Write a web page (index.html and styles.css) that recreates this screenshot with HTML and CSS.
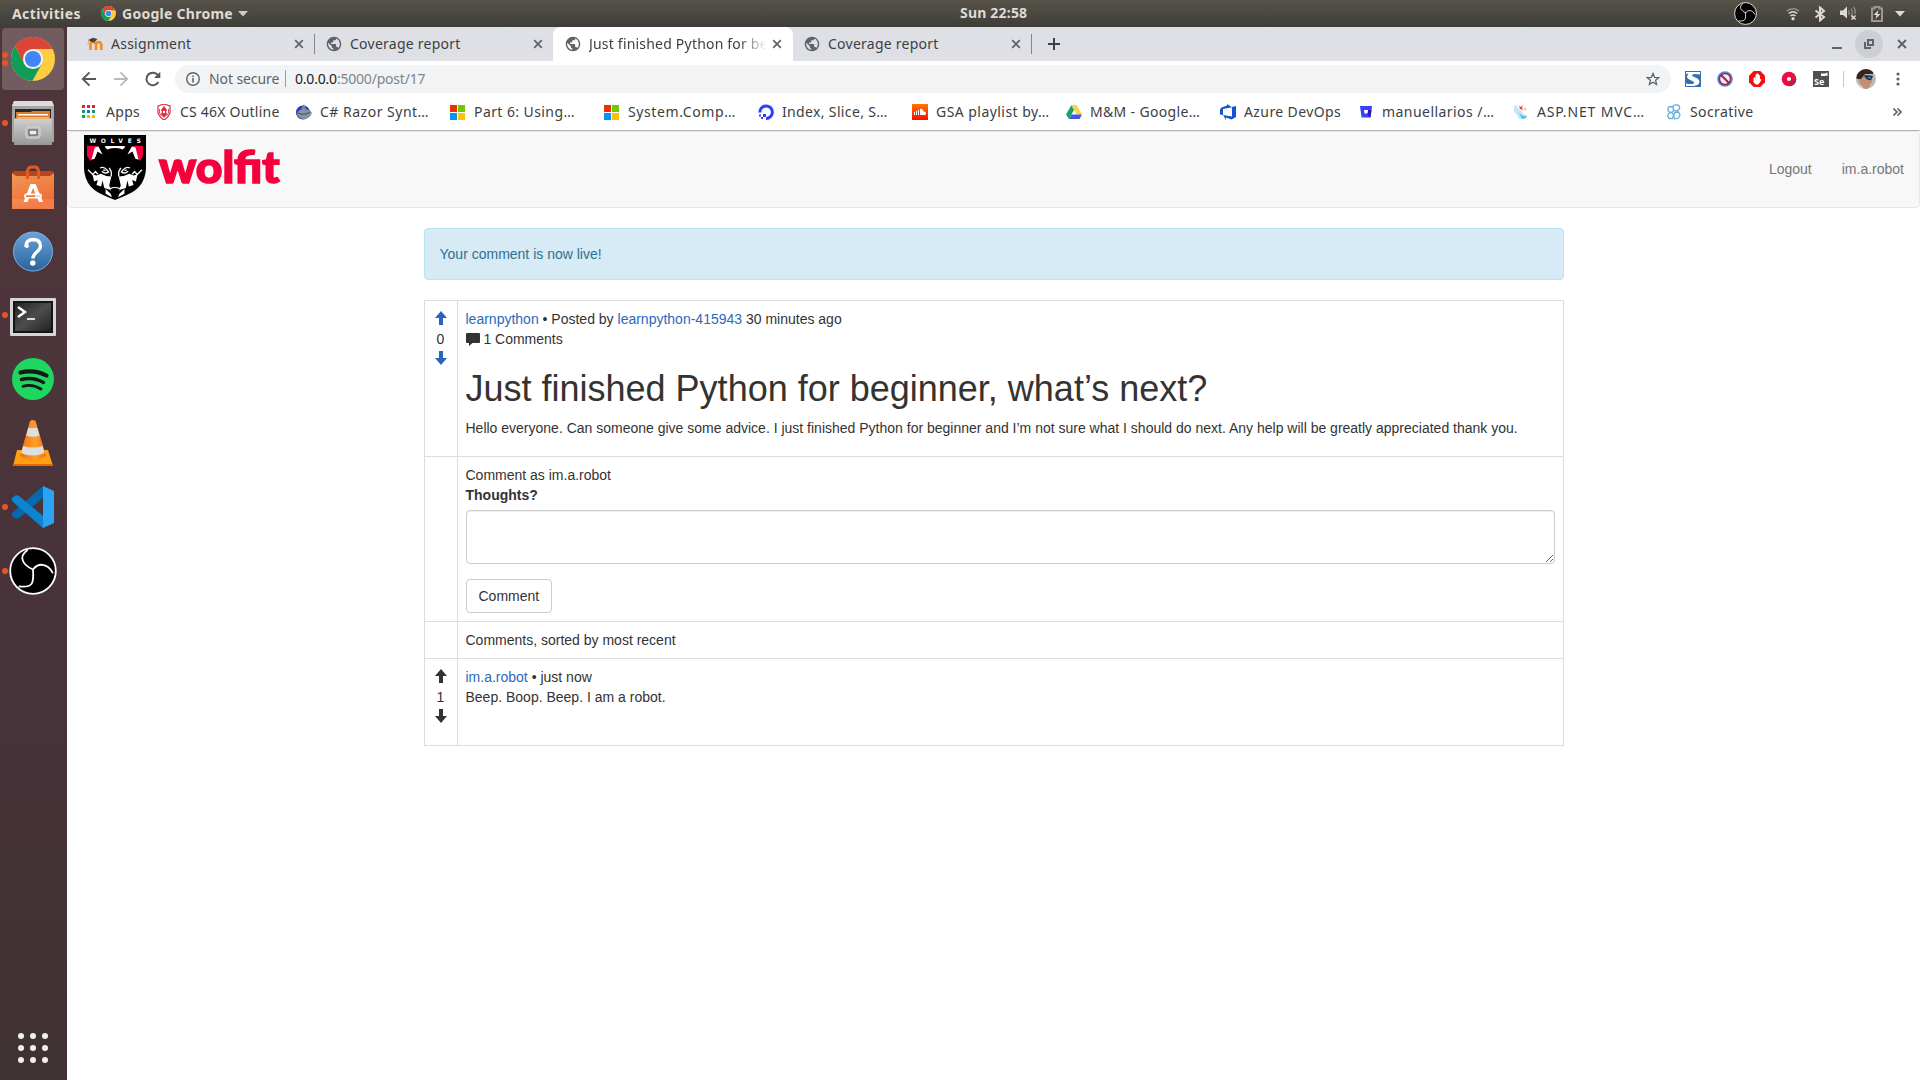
FILE: index.html
```html
<!DOCTYPE html>
<html lang="en">
<head>
<meta charset="utf-8">
<title>Just finished Python for beginner, what’s next?</title>
<link rel="stylesheet" href="styles.css">
</head>
<body>
<svg class="defs" width="0" height="0" aria-hidden="true">
  <symbol id="chrome" viewBox="0 0 48 48">
    <circle cx="24" cy="24" r="24" fill="#ffcd40"/>
    <path d="M4.500 10A24 24 0 0 1 45.400 13.200H24L14.500 29.500Z" fill="#db4437"/>
    <path d="M4.500 10L14.500 29.500L24 35L33.500 29.500L23.300 48A24 24 0 0 1 4.500 10Z" fill="#0f9d58"/>
    <circle cx="24" cy="24" r="11" fill="#f1f1f1"/>
    <circle cx="24" cy="24" r="8.800" fill="#4285f4"/>
  </symbol>
  <symbol id="obs" viewBox="0 0 48 48">
    <circle cx="24" cy="24" r="22.800" fill="#000" stroke="#fff" stroke-width="1.800"/>
    <g fill="none" stroke="#fff" stroke-width="1.800" stroke-linecap="round">
      <path d="M24 22.500C14 18 9 10 18 3.500M24 22.500C29 16 38 15.500 43.500 25.500M24 22.500C25 36 24 41 10.500 39.500"/>
    </g>
  </symbol>
  <symbol id="globe" viewBox="1 1 22 22">
    <path d="M12 2C6.480 2 2 6.480 2 12s4.480 10 10 10 10-4.480 10-10S17.520 2 12 2zm-1 17.930c-3.950-.49-7-3.850-7-7.930 0-.62.08-1.210.21-1.790L9 15v1c0 1.100.9 2 2 2v1.930zm6.900-2.540c-.26-.81-1-1.390-1.900-1.390h-1v-3c0-.55-.45-1-1-1H8v-2h2c.55 0 1-.45 1-1V7h2c1.100 0 2-.9 2-2v-.41c2.930 1.190 5 4.060 5 7.410 0 2.080-.8 3.970-2.100 5.390z" fill="#5f6368"/>
  </symbol>
  <symbol id="close" viewBox="0 0 10 10"><path d="M1.200 1.200L8.800 8.800M8.800 1.200L1.200 8.800" stroke="#5f6368" stroke-width="1.700"/></symbol>
  <symbol id="windows" viewBox="0 0 16 16"><path fill="#f22f00" d="M0 0H7.500V7.500H0Z"/><path fill="#70c800" d="M8.500 0H16V7.500H8.500Z"/><path fill="#0096f2" d="M0 8.500H7.500V16H0Z"/><path fill="#ffc200" d="M8.500 8.500H16V16H8.500Z"/></symbol>
  <symbol id="up" viewBox="0 0 12 14"><path d="M6 0L12 7H8V14H4V7H0Z" fill="currentColor"/></symbol>
  <symbol id="down" viewBox="0 0 12 14"><path d="M6 14L12 7H8V0H4V7H0Z" fill="currentColor"/></symbol>
</svg>

<header class="panel">
  <span class="activities">Activities</span>
  <span class="app-menu"><svg width="15" height="15"><use href="#chrome"/></svg><span class="app-name">Google Chrome</span><svg width="10" height="6"><path d="M0 0H10L5 5.500Z" fill="#cfccc4"/></svg></span>
  <span class="clock">Sun 22:58</span>
  <div class="indicators">
    <svg class="tray-obs" width="23" height="23"><use href="#obs"/></svg>
    <svg width="14" height="14" viewBox="0 0 14 14" fill="none" stroke="#dfdbd2" stroke-width="1.600"><path d="M1 4Q7 -.5 13 4" opacity=".45"/><path d="M2.800 6.500Q7 3 11.200 6.500M4.500 9Q7 7 9.500 9"/><circle cx="7" cy="11.800" r="1.200" fill="#dfdbd2" stroke-width="1"/></svg>
    <svg width="12" height="16" viewBox="0 0 12 16" fill="none" stroke="#dfdbd2" stroke-width="2"><path d="M1.500 4.500L10 11L6 14.500V1.500L10 5L1.500 11.500"/></svg>
    <svg width="17" height="15" viewBox="0 0 17 15"><path d="M0 4.500H3L7 .5V12.500L3 9H0Z" fill="#dfdbd2"/><path d="M8.500 4Q10 6.500 8.500 9M11 2.500Q13.500 6.500 11 10.500M13.500 1Q16 4 15 8" fill="none" stroke="#8a867e" stroke-width="1.400"/><path d="M11.500 9.500L15.500 13.500M15.500 9.500L11.500 13.500" stroke="#dfdbd2" stroke-width="1.700"/></svg>
    <svg width="12" height="16" viewBox="0 0 12 16"><path d="M1 2.500H3.500V1H8.500V2.500H11V15H1Z" fill="none" stroke="#9b978f" stroke-width="2"/><path d="M7.500 4L2.500 9H5.500L4.500 13L9.500 8H6.500Z" fill="#dfdbd2"/></svg>
    <svg width="10" height="6"><path d="M0 0H10L5 5.500Z" fill="#dfdbd2"/></svg>
  </div>
</header>

<div class="desktop">
<nav class="dock">
  <div class="slot active twice"><svg width="44" height="44"><use href="#chrome"/></svg></div>
  <div class="slot running"><svg width="42" height="44" viewBox="0 0 42 44">
    <defs><linearGradient id="metal" x2="0" y2="1"><stop stop-color="#cfcfcf"/><stop offset="1" stop-color="#989898"/></linearGradient></defs>
    <path d="M2 0H40L42 5V41H0V5Z" fill="#a5a5a5"/><path d="M2 0H40L42 5H0Z" fill="#dcdcdc"/><path d="M3 8H39V17H3Z" fill="#2d2622"/><path d="M4 11H19L20 10H38V17H4Z" fill="#e07b28"/><path d="M6 13H36V14.500H6Z" fill="#fff"/><path d="M5 16H37V18H5Z" fill="#f3b36d"/><path d="M2 18H40V44H2Z" fill="url(#metal)"/><rect x="14" y="26" width="14" height="11" rx="2" fill="#bbb" stroke="#d8d8d8"/><rect x="17" y="29" width="8" height="5" fill="#eee" stroke="#444"/></svg></div>
  <div class="slot"><svg width="42" height="44" viewBox="0 0 42 44">
    <defs><linearGradient id="bag" x2=".4" y2="1"><stop stop-color="#ec9a59"/><stop offset="1" stop-color="#f16b30"/></linearGradient></defs>
    <path d="M0 8L2 6H40L42 8V44H0Z" fill="#b8461c"/><path d="M0 8L4 11H38L42 8V44H0Z" fill="url(#bag)"/><path d="M0 34H42V44H0Z" fill="#fff" opacity=".12"/><path d="M15.500 14V6Q16 2 20 2H23Q26 2 26.500 6V14" fill="none" stroke="#e25a23" stroke-width="3"/><path d="M18.500 19H23.500L31 37H27L21 23L15.500 37H11.500Z" fill="#fff"/><rect x="12" y="28.500" width="18" height="5" rx="2.500" fill="#fff"/><path d="M14 30.300H23V32H14Z" fill="#ef7134"/><path d="M23 30.300H29V32H23Z" fill="#ddd"/></svg></div>
  <div class="slot"><svg width="42" height="42" viewBox="0 0 42 42">
    <defs><linearGradient id="help" x2="0" y2="1"><stop stop-color="#6ba4d8"/><stop offset="1" stop-color="#28639b"/></linearGradient></defs>
    <circle cx="21" cy="21.500" r="19.500" fill="url(#help)" stroke="#80afd8"/><path d="M14 17Q13.500 10 20.500 9.500Q28.500 9.500 28.500 16C28.500 21.500 21.500 22 20.700 28.500" fill="none" stroke="#fff" stroke-width="3.300"/><circle cx="14.900" cy="16" r="2" fill="#fff"/><circle cx="20.800" cy="33" r="2.700" fill="#fff"/></svg></div>
  <div class="slot running terminal"><svg width="46" height="39" viewBox="0 0 46 39">
    <defs><linearGradient id="screen" x2="1" y2="1"><stop stop-color="#232323"/><stop offset=".5" stop-color="#4d4d4d"/><stop offset="1" stop-color="#222"/></linearGradient></defs>
    <rect width="46" height="38" rx="1" fill="#d6d6d6"/><rect x="3" y="3" width="40" height="32" fill="#151515"/><path d="M5 5H41V33H5Z" fill="url(#screen)"/><path d="M8 9L15 14L8 19" fill="none" stroke="#fff" stroke-width="2.400"/><path d="M17 21H25" stroke="#ddd" stroke-width="2"/></svg></div>
  <div class="slot"><svg width="42" height="42" viewBox="0 0 42 42"><circle cx="21" cy="21" r="21" fill="#1ed760"/><path d="M8.500 14.500Q22 11 34.500 17.500" fill="none" stroke="#171717" stroke-width="4.200" stroke-linecap="round"/><path d="M9.500 21.500Q21 18.500 31.500 24.500" fill="none" stroke="#171717" stroke-width="3.400" stroke-linecap="round"/><path d="M11 28.300Q20 25.500 29 31" fill="none" stroke="#171717" stroke-width="2.800" stroke-linecap="round"/></svg></div>
  <div class="slot"><svg width="42" height="46" viewBox="0 0 42 46">
    <defs><linearGradient id="cone"><stop stop-color="#ef7408"/><stop offset=".6" stop-color="#ff9d2e"/><stop offset="1" stop-color="#ef7408"/></linearGradient></defs>
    <path d="M5 30H36L41 46H1Z" fill="#ffa012"/><path d="M1.300 44H40.500L41 46H1Z" fill="#df6900"/><path d="M18 1Q20.800 -1 23.500 1L34 36Q21 44 8 36Z" fill="url(#cone)"/><path d="M16.200 8H25.300L27.500 15.500Q21 18 14.200 15.500Z" fill="#dedede"/><path d="M11.200 26Q21 29 30.600 26L32.500 33Q21 38 9 33Z" fill="#dedede"/></svg></div>
  <div class="slot running"><svg width="42" height="42" viewBox="0 0 42 42"><path d="M31 0L0 27V30L4 33L7 32L31 12Z" fill="#0469ad"/><path d="M0 12L4 9L7 10L31 30V42L0 15Z" fill="#0c84d2"/><path d="M31 0L42 5V37L31 42Z" fill="#2aa3f3"/></svg></div>
  <div class="slot running"><svg width="48" height="48"><use href="#obs"/></svg></div>
  <div class="app-grid"><i></i><i></i><i></i><i></i><i></i><i></i><i></i><i></i><i></i></div>
</nav>

<main class="window">
  <div class="tabs">
    <div class="tab first"><svg class="fav" width="16" height="16" viewBox="0 0 16 16"><path d="M3.500 14V8.500Q3.500 6 6 6T9 8.500V14M9 8.500Q9.300 6 11.500 6T14.300 8.500V14" fill="none" stroke="#f68a1f" stroke-width="2.600"/><path d="M1 4L6 1.800L10.500 3L7 6.500L3.500 5.500Z" fill="#444"/><path d="M2 4L.8 9" stroke="#c9a574" stroke-width=".8"/></svg><span class="title">Assignment</span><svg class="x" width="10" height="10"><use href="#close"/></svg></div>
    <div class="tab"><svg class="fav" width="16" height="16"><use href="#globe"/></svg><span class="title">Coverage report</span><svg class="x" width="10" height="10"><use href="#close"/></svg></div>
    <div class="tab current"><svg class="fav" width="16" height="16"><use href="#globe"/></svg><span class="title fade">Just finished Python for be</span><svg class="x" width="10" height="10"><use href="#close"/></svg></div>
    <div class="tab last"><svg class="fav" width="16" height="16"><use href="#globe"/></svg><span class="title">Coverage report</span><svg class="x" width="10" height="10"><use href="#close"/></svg></div>
    <svg class="new-tab" width="12" height="12"><path d="M6 0V12M0 6H12" stroke="#3c4043" stroke-width="2"/></svg>
    <div class="controls">
      <svg width="10" height="14"><path d="M0 10H10V12H0Z" fill="#5f6368"/></svg>
      <span class="restore"><svg width="10" height="10"><path d="M4 1H9V6H4ZM1 3V9H7" fill="none" stroke="#5f6368" stroke-width="2"/></svg></span>
      <svg width="10" height="10" viewBox="0 0 10 10"><path d="M1 1L9 9M9 1L1 9" stroke="#5f6368" stroke-width="2"/></svg>
    </div>
  </div>

  <div class="toolbar">
    <svg width="16" height="16" viewBox="0 0 16 16" fill="none" stroke="#54585d" stroke-width="1.900"><path d="M15 8H2M8.500 1.300L1.800 8L8.500 14.700"/></svg>
    <svg width="16" height="16" viewBox="0 0 16 16" fill="none" stroke="#b9bbbe" stroke-width="1.900"><path d="M1 8H14M7.500 1.300L14.200 8L7.500 14.700"/></svg>
    <svg width="16" height="16" viewBox="0 0 16 16"><path d="M13.300 11A6.300 6.300 0 1 1 12.800 4.200" fill="none" stroke="#54585d" stroke-width="2"/><path d="M15.300 .8V7H9Z" fill="#54585d"/></svg>
    <div class="omnibox">
      <svg width="14" height="14" viewBox="0 0 14 14"><circle cx="7" cy="7" r="6.300" fill="none" stroke="#5f6368" stroke-width="1.400"/><path d="M6.200 6H7.800V10.500H6.200ZM6.200 3.400H7.800V5H6.200Z" fill="#5f6368"/></svg>
      <span class="insecure">Not secure</span>
      <span class="url"><b>0.0.0.0</b>:5000/post/17</span>
      <svg class="star" width="14" height="14" viewBox="0 0 14 14"><path d="M7 1.500L8.600 5.300L12.800 5.600L9.600 8.300L10.600 12.400L7 10.200L3.400 12.400L4.400 8.300L1.200 5.600L5.400 5.300Z" fill="none" stroke="#5f6368" stroke-width="1.300"/></svg>
    </div>
    <div class="extensions">
      <svg width="16" height="16" viewBox="0 0 16 16"><path d="M0 0H16V16H0Z" fill="#3470ac"/><path d="M1 1H15V3.500Q7 2 7 4.500C7 6 14.500 6.500 14.500 11Q14 15 7 15H1V12.500Q9 14 9 11.500C9 9.500 2 9 2 5.500L3.500 2.500L1 3Z" fill="#fff"/></svg>
      <svg width="16" height="16" viewBox="0 0 16 16"><circle cx="8" cy="8" r="7.800" fill="#4f8ee8"/><circle cx="8" cy="8" r="5.600" fill="#f6eaf0" stroke="#a62244" stroke-width="1.500"/><path d="M4 4L12 12" stroke="#8c2749" stroke-width="2"/></svg>
      <svg width="16" height="16" viewBox="0 0 16 16"><path d="M4.700 0H11.300L16 4.700V11.300L11.300 16H4.700L0 11.300V4.700Z" fill="#f40d12"/><path d="M4.500 7V11Q6 14 8.500 13.700Q10 13.500 12.500 8.500L11 8V4.500H10V7.500V3H9V7V2.500H7.500V7V3.500H6.500V8L5.500 6Z" fill="#fff"/></svg>
      <svg width="16" height="16" viewBox="0 0 16 16"><circle cx="8" cy="8" r="7.300" fill="#e90f40"/><path d="M8 15.300A7.300 7.300 0 0 0 15.300 8H8Z" fill="#bd1d4c"/><circle cx="8" cy="8" r="2" fill="#fff"/></svg>
      <svg width="16" height="16" viewBox="0 0 16 16"><path d="M0 0H16V16H0Z" fill="#505050"/><path d="M8 2.500H12L14.500 1.500V5L12 4.500V5H8Z" fill="#fff"/><text x="1" y="14" class="se">Se</text></svg>
      <span class="rule"></span>
      <svg width="20" height="20" viewBox="0 0 20 20"><defs><clipPath id="round"><circle cx="10" cy="10" r="10"/></clipPath></defs><g clip-path="url(#round)"><path fill="#b5bcb6" d="M0 0H20V20H0Z"/><path fill="#c48d76" d="M1 6H17L16 13L14 16L12 20H3L4 14Z"/><path fill="#d9d3cd" d="M0 15L5 16L8 20H0Z"/><path fill="#35251f" d="M0 9Q1 -2 12 0Q18 1 17 5L9 5L5 10H2Z"/><path fill="#153354" d="M8 6L17 7L15 11Q10 12 8 6Z"/><path fill="#18a6d6" d="M11 8L15 8L14 10Z"/></g></svg>
      <svg class="more" width="4" height="14"><circle cx="2" cy="2" r="1.600"/><circle cx="2" cy="7" r="1.600"/><circle cx="2" cy="12" r="1.600"/></svg>
    </div>
  </div>

  <div class="bookmarks">
    <span class="mark m1"><svg width="16" height="16" viewBox="0 0 16 16"><path fill="#ea1b3d" d="M0 1H3V4H0ZM5 1H8V4H5ZM10 1H13V4H10Z"/><path fill="#0aa15a" d="M0 6H3V9H0Z"/><path fill="#2865f3" d="M5 6H8V9H5Z"/><path fill="#0aa15a" d="M10 6H13V9H10ZM0 11H3V14H0Z"/><path fill="#ffb300" d="M5 11H8V14H5ZM10 11H13V14H10Z"/></svg><span>Apps</span></span>
    <span class="mark m2"><svg width="14" height="16" viewBox="0 0 14 16"><path d="M1 2L7 0L13 2V9Q11 14 7 16Q3 14 1 9Z" fill="#fff" stroke="#e5253f" stroke-width="1.200"/><path d="M7 2L10 6L9 8L10 10L7 14L4 10L5 8L4 6Z" fill="#e5253f"/><path d="M2.500 5V9L4.500 12M11.500 5V9L9.500 12" stroke="#e5253f" fill="none" stroke-width=".8"/><circle cx="7" cy="8" r="1.200" fill="#fff"/></svg><span>CS 46X Outline</span></span>
    <span class="mark m3"><svg width="16" height="16" viewBox="0 0 16 16"><circle cx="7" cy="8.500" r="7" fill="#223bb8"/><path d="M1 10Q2 5 8 5T16 9Q14 15 7 15Q2 14 1 10Z" fill="#8792a2"/><path d="M5 5L8 0L10 5Z" fill="#78859c"/><path d="M2 9Q8 12 14 8" stroke="#444d5c" fill="none"/></svg><span>C# Razor Synt…</span></span>
    <span class="mark m4"><svg width="15" height="15"><use href="#windows"/></svg><span>Part 6: Using…</span></span>
    <span class="mark m5"><svg width="15" height="15"><use href="#windows"/></svg><span>System.Comp…</span></span>
    <span class="mark m6"><svg width="16" height="16" viewBox="0 0 16 16"><path d="M1.800 8.500A6.300 6.300 0 1 1 8 14.500" fill="none" stroke="#2542ff" stroke-width="3"/><path d="M5 10H8V13H5ZM3 13H5V15H3ZM1 10.500H3V12.500H1Z" fill="#2542ff"/></svg><span>Index, Slice, S…</span></span>
    <span class="mark m7"><svg width="16" height="16" viewBox="0 0 16 16"><defs><linearGradient id="sound" x2="0" y2="1"><stop stop-color="#ff7800"/><stop offset="1" stop-color="#ff0c00"/></linearGradient></defs><path fill="url(#sound)" d="M0 0H16V16H0Z"/><path d="M8 5Q11 4 11.500 7.500Q14 7 14 9.500Q14 11 12.500 11H8Z" fill="#fff"/><path d="M2.500 8V11M4.500 7V11M6.500 6V11" stroke="#fff"/></svg><span>GSA playlist by…</span></span>
    <span class="mark m8"><svg width="16" height="16" viewBox="0 0 16 16"><path fill="#16a463" d="M5.500 1L8 6L3 15L0 10.500Z"/><path fill="#ffd33f" d="M5.500 1H10.500L16 10.500H10.500Z"/><path fill="#4356e6" d="M5.500 10.500H16L13.500 15H3Z"/></svg><span>M&amp;M - Google…</span></span>
    <span class="mark m9"><svg width="16" height="16" viewBox="0 0 16 16"><path d="M0 5.500L1.500 3.500L7 1.500V0L12 3.200L3 5V11L0 10.500ZM12 3L16 2V13L11.500 15.500L6 13.500V16L3 11L12 12.500Z" fill="#1254d5"/></svg><span>Azure DevOps</span></span>
    <span class="mark m10"><svg width="12" height="12" viewBox="0 0 12 12"><path d="M0 0H12L10.500 11.500H1.500Z" fill="#3543ff"/><path d="M8 4H11.500L10.500 11.500L7 8Z" fill="#3110c7"/><path d="M4 4H8L7.500 7.500H4.500Z" fill="#fff"/></svg><span>manuellarios /…</span></span>
    <span class="mark m11"><svg width="16" height="16" viewBox="0 0 16 16"><path d="M1 2L4 1L5 4L8 7L13 12L12 15L6 15L4 11L1 8Z" fill="#c5e8f6"/><path d="M6 2L8 3L10 1L9 4L10 6L7 5Z" fill="#e83f35"/><path d="M6 9Q11 14 14 11L13 14L9 15Z" fill="#63bce9"/><circle cx="12" cy="5" r="1.500" fill="#f3cfb6"/></svg><span>ASP.NET MVC…</span></span>
    <span class="mark m12"><svg width="14" height="16" viewBox="0 0 14 16" fill="none" stroke="#68b0da" stroke-width="1.300"><path d="M6.500 1.500L9 .7L12 1.500L12.700 4.500L10 7L7 6.500L6 4ZM1.500 3L4.500 2.500L6.500 4.500L6 7.500L3 8.500L.8 6.500ZM1.500 9.500L5 8.500L6.500 11L5.500 14.500L2 14.500L.8 12ZM8 8.500L11.500 8L13 11L11.500 14L8 15L6.500 12Z"/></svg><span>Socrative</span></span>
    <span class="overflow"><svg width="9" height="8"><path d="M.5 .5L4 4L.5 7.500M4.500 .5L8 4L4.500 7.500" fill="none" stroke="#5f6368" stroke-width="1.600"/></svg></span>
  </div>

  <section class="page">
    <nav class="navbar">
      <a class="brand">
        <svg width="62" height="65" viewBox="43 29 184 194" preserveAspectRatio="none">
          <path d="M43 29H227V128Q226 160 207 183C190 202 165 211 135 223C105 211 80 202 63 183Q44 160 43 128Z" fill="#000"/>
          <path d="M52 61H83L69 98L62 107L52 92ZM186 61H218V92L209 107L199 90ZM105 62H166L158 70Q135 65 111 71Z" fill="#f5003d"/>
          <path d="M65 103L75 66L86 63L98 87L83 78L76 99ZM205 103L196 66L185 63L172 87L187 78L194 99ZM104 64L112 72Q135 64 158 72L166 64L160 62H110Z" fill="#fff"/>
          <path d="M75 99L83 82L92 91L82 105ZM195 99L187 82L178 91L188 105Z" fill="#000"/>
          <g fill="none" stroke="#f7f7f7" stroke-width="4">
            <path d="M91 127Q103 121 116 139Q106 147 96 137M179 127Q167 121 154 139Q164 147 174 137"/>
            <path d="M55 133L69 147L77 138L84 146M215 133L201 147L193 138L186 146"/>
            <path d="M118 127L124 139V153M152 127L146 139V153"/>
          </g>
          <path d="M68 146L80 150L93 145L109 151L124 153L118 179L122 193L103 187L98 165L94 183L80 178L84 163L73 168ZM202 146L190 150L177 145L161 151L146 153L152 179L148 193L167 187L172 165L176 183L190 178L186 163L197 168Z" fill="#fff"/>
          <path d="M100 131L110 134L101 137ZM170 131L160 134L169 137Z" fill="#fff"/>
          <path d="M119 187Q135 181 151 187L147 197H123ZM107 190L122 204L126 215L107 204ZM163 190L148 204L144 215L163 204Z" fill="#fff"/>
          <path d="M121 191Q135 184 149 191L143 204L135 207L127 204Z" fill="#000"/>
          <text x="59" y="52" class="wolves" textLength="153">WOLVES</text>
        </svg>
        <span class="wordmark">wolfit</span>
      </a>
      <div class="nav-links"><a>Logout</a><a>im.a.robot</a></div>
    </nav>

    <div class="container">
      <div class="alert">Your comment is now live!</div>
      <table class="post">
        <tr>
          <td class="votes linked"><div><svg width="12" height="14"><use href="#up"/></svg></div><div>0</div><div><svg width="12" height="14"><use href="#down"/></svg></div></td>
          <td>
            <a>learnpython</a> • Posted by <a>learnpython-415943</a> 30 minutes ago<br>
            <svg class="bubble" width="14" height="13" viewBox="0 0 14 13"><path d="M1 0H13Q14 0 14 1V9Q14 10 13 10H6.500L3 13V10H1Q0 10 0 9V1Q0 0 1 0Z" fill="#333"/></svg> 1 Comments
            <h1>Just finished Python for beginner, what’s next?</h1>
            <p>Hello everyone. Can someone give some advice. I just finished Python for beginner and I’m not sure what I should do next. Any help will be greatly appreciated thank you.</p>
          </td>
        </tr>
        <tr>
          <td></td>
          <td>
            Comment as im.a.robot
            <form>
              <div class="form-group"><label for="thoughts">Thoughts?</label><textarea id="thoughts"></textarea></div>
              <button type="button">Comment</button>
            </form>
          </td>
        </tr>
        <tr><td></td><td>Comments, sorted by most recent</td></tr>
        <tr>
          <td class="votes"><div><svg width="12" height="14"><use href="#up"/></svg></div><div>1</div><div><svg width="12" height="14"><use href="#down"/></svg></div></td>
          <td class="comment"><a>im.a.robot</a> • just now<p>Beep. Boop. Beep. I am a robot.</p></td>
        </tr>
      </table>
    </div>
  </section>
</main>
</div>
</body>
</html>
```

FILE: styles.css
```css
* { box-sizing: border-box; }
body { margin: 0; width: 1920px; height: 1080px; overflow: hidden; display: flex; flex-direction: column; background: #fff; font-family: "Noto Sans", "Open Sans", sans-serif; }
svg { display: block; flex: none; }
.defs { position: absolute; }

/* desktop panel */
.panel { height: 27px; flex: none; display: grid; grid-template-columns: 101px 859px 1fr auto; align-items: center; background: linear-gradient(#57534b, #3f3d38); color: #dfdbd2; font-size: 14px; font-weight: 700; line-height: 26px; white-space: nowrap; }
.activities { padding-left: 12px; letter-spacing: .38px; }
.app-menu { display: flex; align-items: center; }
.app-name { width: 110px; margin: 0 6px; letter-spacing: .27px; }
.clock { line-height: 24px; padding-bottom: 2px; letter-spacing: .2px; }
.indicators { display: flex; align-items: center; padding-right: 15px; gap: 14px; }
.indicators > :last-child { margin-left: -2px; }
.tray-obs { margin-right: 15px; }

.desktop { flex: 1; display: flex; min-height: 0; }

/* dock */
.dock { width: 67px; flex: none; display: flex; flex-direction: column; background: linear-gradient(#50363b, #48333a 60%, #3f3233); }
.slot { position: relative; height: 64px; flex: none; display: flex; align-items: center; justify-content: center; padding-right: 1px; }
.slot.active::before { content: ""; position: absolute; left: 2px; top: 1px; width: 62px; height: 62px; border-radius: 4px; background: #725c60; }
.slot.active svg { z-index: 1; }
.terminal { padding-top: 4px; }
.slot svg { position: relative; }
.running::after, .twice::after { content: ""; position: absolute; left: 2px; top: 29px; width: 6px; height: 6px; border-radius: 50%; background: #e95420; }
.twice::after { top: 25px; box-shadow: 0 8px #e95420; }
.app-grid { margin: auto 0 17px 18px; display: grid; grid-template-columns: repeat(3, 6px); gap: 6px; }
.app-grid i { height: 6px; border-radius: 50%; background: #f2f0ee; }

/* browser chrome */
.window { flex: 1; display: flex; flex-direction: column; min-width: 0; color: #3c4043; font-size: 14px; }
.tabs { height: 34px; flex: none; display: flex; align-items: center; background: #dee0e6; }
.tab { width: 238px; height: 34px; display: flex; align-items: center; padding: 0 10px 0 11px; position: relative; }
.tab.first { width: 248px; padding: 0 11px 0 20px; }
.tab.current { background: #fff; border-radius: 8px 8px 0 0; width: 240px; padding: 0 11px 0 12px; }
.tab.last { width: 239px; padding-right: 11px; }
.tab:not(.current)::after { content: ""; position: absolute; right: 0; top: 7px; height: 20px; width: 1px; background: #85888d; }
.tab:nth-child(2)::after { display: none; }
.tab .title { margin-left: 8px; width: 176px; white-space: nowrap; overflow: hidden; line-height: 22px; letter-spacing: .25px; }
.tab .x { margin-left: auto; }
.tab .fade { letter-spacing: .2px; -webkit-mask-image: linear-gradient(90deg, #000 150px, transparent 178px); mask-image: linear-gradient(90deg, #000 150px, transparent 178px); }
.new-tab { margin-left: 16px; }
.controls { margin-left: auto; padding-right: 13px; display: flex; align-items: center; gap: 13px; }
.restore { width: 28px; height: 28px; border-radius: 50%; background: #cdcfd4; display: flex; align-items: center; justify-content: center; }
.controls > :last-child { margin-left: 1px; }

.toolbar { height: 36px; flex: none; display: flex; align-items: center; padding-left: 14px; gap: 16px; line-height: 18px; }
.omnibox { width: 1496px; height: 28px; margin-left: -2px; border-radius: 14px; background: #f1f3f4; display: flex; align-items: center; padding: 0 11px; }
.insecure { width: 77px; margin: 0 0 1px 9px; border-right: 1px solid #9a9da1; color: #5f6368; line-height: 17px; white-space: nowrap; letter-spacing: -.1px; }
.url { margin: 0 0 1px 9px; color: #80868b; letter-spacing: -.2px; }
.url b { font-weight: 400; color: #202124; }
.star { margin-left: auto; }
.extensions { flex: 1; display: flex; align-items: center; gap: 16px; margin-left: -2px; }
.rule { width: 1px; height: 16px; background: #c6c8cb; margin: 0 -4px 0 -2px; }
.more { margin-left: 4px; fill: #5f6368; }
.se { font: 700 9px "Open Sans", sans-serif; fill: #fff; }

.bookmarks { height: 34px; flex: none; display: grid; grid-template-columns: 75px 139px 154px 154px 154px 154px 154px 154px 140px 153px 154px 1fr auto; align-items: center; padding: 0 0 3px 15px; border-bottom: 1px solid #b3b3b3; }
.mark { display: flex; align-items: center; white-space: nowrap; line-height: 20px; }
.mark > svg { margin-right: 8px; }
.m1 { letter-spacing: .3px; }
.m2 { letter-spacing: .22px; }
.m2 > svg { margin-right: 9px; }
.m3 { letter-spacing: .5px; }
.m4, .m5 { letter-spacing: .42px; }
.m4 > svg, .m5 > svg { margin-right: 9px; }
.m5 { letter-spacing: .6px; }
.m6 { letter-spacing: .35px; }
.m7 { letter-spacing: .45px; }
.m8 { letter-spacing: .33px; }
.m9 { letter-spacing: .4px; }
.m10 { letter-spacing: .45px; }
.m10 > svg { margin-right: 10px; }
.m11 { letter-spacing: .85px; }
.m12 { letter-spacing: .4px; }
.m12 > svg { margin-right: 9px; }
.overflow { padding-right: 18px; }

/* web page */
.page { flex: 1; color: #333; font: 14px/20px "Liberation Sans", Arial, sans-serif; }
.page a { color: #2c69bd; text-decoration: none; }
.navbar { height: 77px; margin-bottom: 20px; border: 1px solid #e7e7e7; border-radius: 4px; background: #f8f8f8; display: flex; justify-content: space-between; }
.brand { display: flex; padding: 3px 0 0 16px; }
.wolves { font: 700 18px "DejaVu Sans", sans-serif; fill: #f7f7f7; }
.page .wordmark { margin: 6px 0 0 13px; font: 900 43px/52px Lato, sans-serif; color: #f5003d; -webkit-text-stroke: 1.6px #f5003d; transform: scaleX(1.07); transform-origin: left; }
.nav-links { display: flex; gap: 30px; padding: 27px 15px 0 0; }
.page .nav-links a { color: #777; }
.container { width: 1170px; padding: 0 15px; margin: 0 auto; }
.alert { padding: 15px; margin-bottom: 20px; border: 1px solid #b5e7ee; border-radius: 4px; background: #d6ebf6; color: #31708f; }
.post { width: 100%; table-layout: fixed; border-collapse: collapse; }
.post td { padding: 8px; border: 1px solid #ddd; vertical-align: top; }
.post td:first-child { width: 33px; }
.post .votes { text-align: center; padding-bottom: 18px; }
.votes div { height: 20px; }
.votes div:not(:nth-child(2)) { padding-top: 2px; }
.votes svg { margin: 0 auto; }
.votes.linked svg { color: #2a66b8; }
.bubble { display: inline-block; vertical-align: -2px; }
.post h1 { height: 39px; margin: 20px 0 10px; font-size: 36px; font-weight: 500; line-height: 1.1; }
.post p { margin: 0 0 10px; }
.form-group { margin-bottom: 15px; }
.form-group label { display: block; margin-bottom: 5px; font-weight: 700; }
textarea { display: block; width: 100%; height: 54px; border: 1px solid #ccc; border-radius: 4px; box-shadow: inset 0 1px 1px rgba(0,0,0,.075); }
button { display: block; height: 34px; padding: 6px 12px; border: 1px solid #ccc; border-radius: 4px; background: #fff; color: #333; font: inherit; }
```
